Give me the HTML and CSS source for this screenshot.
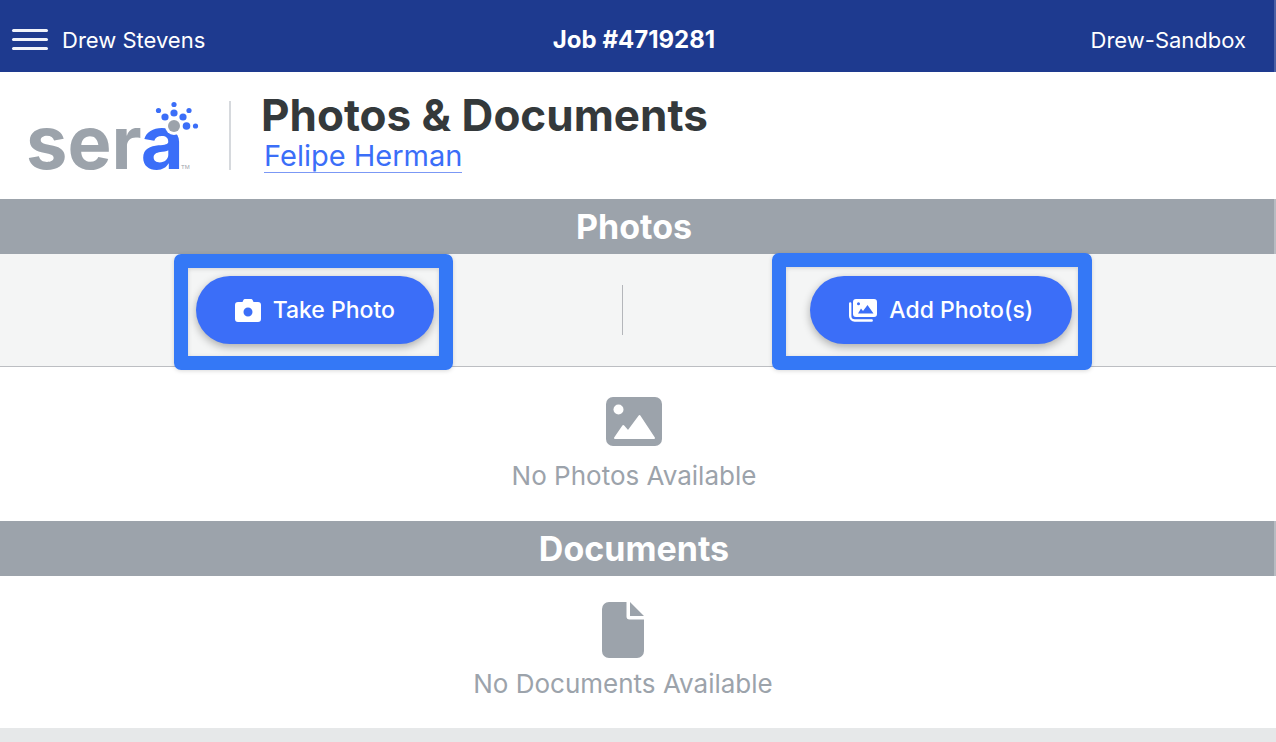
FILE: index.html
```html
<!DOCTYPE html>
<html lang="en">

  <head>
    <meta charset="UTF-8">
    <meta name="viewport" content="width=device-width, initial-scale=1.0">
    <title>Photos &amp; Documents</title>
    <link rel="stylesheet" href="styles.css">
  </head>

  <body>
    <header class="topbar">
      <div class="topbar-user">
        <button class="menu-btn" type="button" aria-label="Menu">
          <span></span>
          <span></span>
          <span></span>
        </button>
        <span>Drew Stevens</span>
      </div>
      <div class="topbar-job">Job #4719281</div>
      <div class="topbar-company">Drew-Sandbox</div>
    </header>

    <main>
      <div class="page-head">
        <svg class="logo" width="176" height="100" viewBox="0 0 176 100" role="img" aria-label="sera">
          <text class="logo-text" x="-2" y="71">ser<tspan class="logo-a">a</tspan></text>
          <text class="logo-tm" x="153" y="71">TM</text>
          <circle cx="146" cy="28" r="9" fill="#fff"/>
          <circle cx="146" cy="28" r="6" fill="#9ca3ab"/>
          <g fill="#3b6ef8">
            <circle cx="146" cy="15" r="3.6"/>
            <circle cx="137" cy="19" r="3.6"/>
            <circle cx="155" cy="19" r="3.6"/>
            <circle cx="158.5" cy="28" r="3.8"/>
            <circle cx="146" cy="6.5" r="2.6"/>
            <circle cx="130.5" cy="12.5" r="2.6"/>
            <circle cx="161" cy="12.5" r="2.6"/>
            <circle cx="167.5" cy="28" r="2.6"/>
          </g>
        </svg>
        <div class="page-title">
          <h1>Photos &amp; Documents</h1>
          <a href="#">Felipe Herman</a>
        </div>
      </div>

      <section>
        <h2 class="section-bar">Photos</h2>
        <div class="actions">
          <div class="action action-take">
            <button class="btn" type="button">
              <svg width="26" height="23" viewBox="0 0 26 23" aria-hidden="true">
                <path fill="#fff" fill-rule="evenodd" d="M3 3h4.5l.8-1.8C8.6.4 9.2 0 10 0h6c.8 0 1.4.4 1.7 1.2L18.5 3H23a3 3 0 0 1 3 3v14a3 3 0 0 1-3 3H3a3 3 0 0 1-3-3V6a3 3 0 0 1 3-3zm10 5.5a4.5 4.5 0 1 0 0 9 4.5 4.5 0 0 0 0-9z"/>
              </svg>
              Take Photo
            </button>
          </div>
          <div class="divider"></div>
          <div class="action action-add">
            <button class="btn" type="button">
              <svg width="28" height="23" viewBox="0 0 28 23" aria-hidden="true">
                <path fill="none" stroke="#fff" stroke-width="2.4" stroke-linecap="round" d="M1.2 4.5V17a4.5 4.5 0 0 0 4.5 4.5h17"/>
                <path fill="#fff" fill-rule="evenodd" d="M7 0h18a3 3 0 0 1 3 3v12a3 3 0 0 1-3 3H7a3 3 0 0 1-3-3V3a3 3 0 0 1 3-3zm2 14.5h15.5L18.5 6l-4.5 6-2-2.5zM9.5 3.3a1.5 1.5 0 1 0 0 3 1.5 1.5 0 0 0 0-3z"/>
              </svg>
              Add Photo(s)
            </button>
          </div>
        </div>
        <div class="empty">
          <svg width="56" height="49" viewBox="0 0 56 49" aria-hidden="true">
            <rect width="56" height="49" rx="7" fill="#9ca3ab"/>
            <circle cx="12.5" cy="12.5" r="5" fill="#fff"/>
            <path fill="#fff" stroke="#fff" stroke-width="2" stroke-linejoin="round" d="M9 41l8.2-12 4.8 5.5L33.5 19 48 41z"/>
          </svg>
          <p>No Photos Available</p>
        </div>
      </section>

      <section>
        <h2 class="section-bar">Documents</h2>
        <div class="empty empty-docs">
          <svg width="42" height="56" viewBox="0 0 42 56" aria-hidden="true">
            <path fill="#9ca3ab" d="M7 0h17.5v14.5a3 3 0 0 0 3 3H42V49a7 7 0 0 1-7 7H7a7 7 0 0 1-7-7V7a7 7 0 0 1 7-7zM28 0l14 14H28z"/>
          </svg>
          <p>No Documents Available</p>
        </div>
      </section>
    </main>
  </body>

</html>
```
FILE: styles.css
```css
* {
  box-sizing: border-box;
}

body {
  margin: 0;
  min-height: 100vh;
  background-color: #e6e8e9;
  font-family: Inter, "Liberation Sans", sans-serif;
  color: #34393b;
}

h1,
h2,
p {
  margin: 0;
}

main {
  background-color: #fff;
}

.topbar {
  display: grid;
  grid-template-columns: 1fr auto 1fr;
  align-items: center;
  height: 72px;
  padding: 7px 18px 0 12px;
  background-color: #1e3a8f;
  border-right: 2px solid #4a60a5;
  color: #fff;
  font-size: 22px;
  line-height: 32px;
}

.topbar-user {
  display: flex;
  align-items: center;
  gap: 14px;
}

.menu-btn {
  display: flex;
  flex-direction: column;
  gap: 6px;
  width: 36px;
  padding: 0;
  border: 0;
  background: none;
}

.menu-btn span {
  height: 3px;
  border-radius: 2px;
  background-color: #f1f3fa;
}

.topbar-job {
  font-size: 24px;
  font-weight: 700;
}

.topbar-company {
  padding-right: 10px;
  text-align: right;
}

.page-head {
  display: flex;
  padding: 22px 28px;
  height: 127px;
}

.logo {
  flex: none;
  margin-top: 4px;
}

.logo-text {
  fill: #9ca3ab;
  font: bold 74px Inter, "Liberation Sans", sans-serif;
}

.logo-a {
  fill: #3b6ef8;
}

.logo-tm {
  fill: #9ca3ab;
  font: 6px "Liberation Sans", sans-serif;
}

.page-title {
  position: relative;
  margin-left: 25px;
  padding-left: 32px;
}

.page-title::before {
  content: "";
  position: absolute;
  top: 7px;
  left: 0;
  width: 2px;
  height: 69px;
  background-color: #d6d9dd;
}

.page-title h1 {
  font-size: 44px;
  font-weight: 700;
  line-height: 42px;
}

.page-title a {
  display: inline-block;
  margin: 3px 0 0 3px;
  border-bottom: 1px solid #7b98f5;
  color: #3b6ef8;
  font-size: 29px;
  line-height: 33px;
  text-decoration: none;
}

.section-bar {
  padding-right: 6px;
  border-right: 2px solid #b7bcc2;
  background-color: #9ca3ab;
  color: #fff;
  font-size: 34px;
  font-weight: 700;
  line-height: 55px;
  text-align: center;
}

.actions {
  display: flex;
  justify-content: space-evenly;
  align-items: center;
  height: 113px;
  padding: 0 16px 0 8px;
  background-color: #f4f5f5;
  border-bottom: 1px solid #bcbec2;
}

.divider {
  width: 1px;
  height: 50px;
  background-color: #b4b6ba;
}

.action {
  position: relative;
}

.btn {
  display: flex;
  align-items: center;
  justify-content: center;
  gap: 12px;
  height: 68px;
  padding: 0 39px;
  border: 0;
  border-radius: 34px;
  background-color: #3b6ef8;
  box-shadow: 0 3px 8px rgba(0, 0, 0, 0.3);
  color: #fff;
  font-family: inherit;
  font-size: 23px;
  font-weight: 500;
  white-space: nowrap;
}

/* callout frames around the buttons */
.action::after {
  content: "";
  position: absolute;
  border: 14px solid #3478f6;
  border-radius: 7px;
  box-shadow: 0 1px 4px rgba(0, 0, 0, 0.15), inset 0 1px 4px rgba(0, 0, 0, 0.15);
  pointer-events: none;
}

.action-take::after {
  inset: -22px -19px -26px -22px;
}

.action-add::after {
  inset: -23px -20px -26px -38px;
}

.empty {
  display: flex;
  flex-direction: column;
  align-items: center;
  gap: 10px;
  padding: 30px 8px 25px 0;
  color: #9ca3ab;
  font-size: 26px;
  line-height: 40px;
}

.empty-docs {
  gap: 6px;
  padding: 26px 30px 24px 0;
}
```
